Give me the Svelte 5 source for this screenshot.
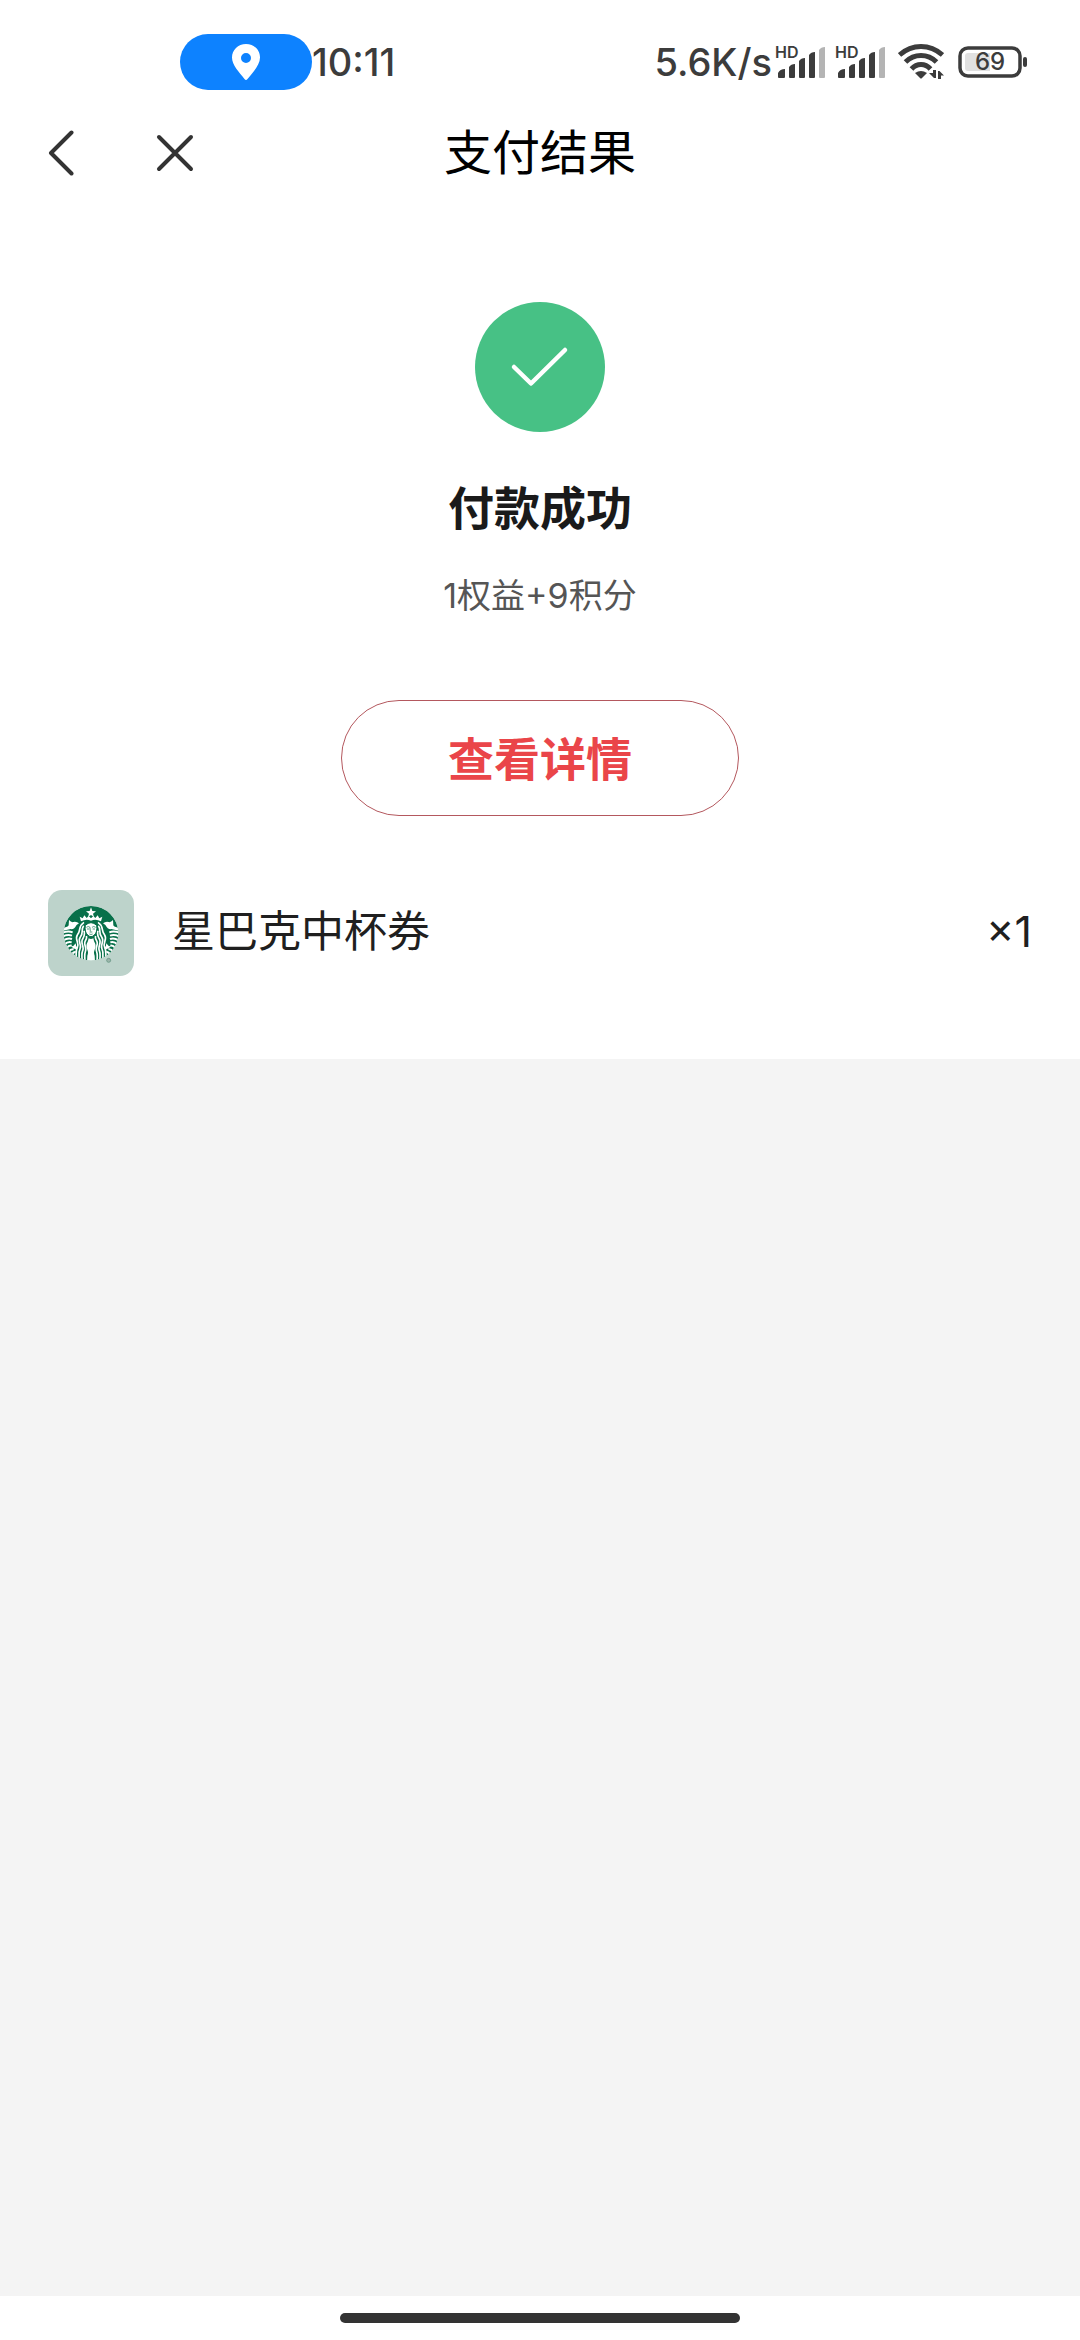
<script>
  const signals = ['SIM 1', 'SIM 2'];
  const items = [{ name: '星巴克中杯券', count: 1 }];
</script>

{#snippet sirenHalf()}
  <path class="white" d="M90 120 Q97 128 103 126 Q113 124 120 130 Q111 135 109 141 Q105 149 95 147 L72 152 L74 143 Q86 142 89 136 Z" />
  <g class="stripe">
    <path d="M70 158 Q88 152 101 157" />
    <path d="M70 170 Q86 162 99 167" />
    <path d="M72 182 Q86 172 99 177" />
    <path d="M76 194 Q87 183 98 187" />
    <path d="M82 205 Q90 195 98 197" />
    <path d="M89 216 Q96 206 104 208" />
    <path d="M98 226 Q102 215 110 216" />
  </g>
  <path class="white" d="M96 199 Q104 200 110 190 Q110 200 116 205 Q108 212 96 199 Z" />
  <g class="hair">
    <path d="M135 127 C116 139 127 151 115 165 C106 178 122 188 115 202 C108 215 114 225 110 237" />
    <path d="M134 137 C125 148 135 158 124 171 C114 184 130 193 123 207 C117 219 123 230 119 242" />
    <path d="M135 152 C139 164 136 168 131 177 C123 189 137 199 131 212 C126 224 131 233 128 246" />
    <path d="M142 168 C145 174 140 180 138 185 C134 196 144 201 139 215 C135 226 139 236 137 246" />
  </g>
  <path class="white" d="M122 110 L131 115 L136 106 L143 114 L149 108 L156 115 L156 122 Q141 116 126 124 Z" />
{/snippet}

<div class="page">
  <header class="status">
    <div class="left">
      <span class="pill">
        <svg width="28" height="38" viewBox="0 0 28 38" aria-hidden="true">
          <path fill="#fff" fill-rule="evenodd" d="M14 1 C6 1 0 7 0 14.500 C0 22 7 29 12.500 36 Q14 38 15.500 36 C21 29 28 22 28 14.500 C28 7 22 1 14 1 Z M14 10 a5 5 0 1 1 0 10 a5 5 0 1 1 0 -10 Z" />
        </svg>
      </span>
      <time>10:11</time>
    </div>
    <div class="right">
      <span class="speed">5.6K/s</span>
      {#each signals as signal}
        <span class="signal" aria-label={signal}>
          <small>HD</small>
          <svg width="48" height="32" viewBox="0 0 48 32" aria-hidden="true">
            <path fill="#3c3c3c" d="M0 31 V27 Q2 23 7 23 V31 Q7 32 6 32 H1 Q0 32 0 31 Z M11 31 V21 Q13 18 17 18 V31 Q17 32 16 32 H12 Q11 32 11 31 Z M21 31 V15 Q23 12 27 12 V31 Q27 32 26 32 H22 Q21 32 21 31 Z M31 31 V9 Q33 6 37 6 V31 Q37 32 36 32 H32 Q31 32 31 31 Z" />
            <path fill="#b4b4b4" d="M41 31 V4 Q43 1 47 1 V31 Q47 32 46 32 H42 Q41 32 41 31 Z" />
          </svg>
        </span>
      {/each}
      <svg class="wifi" width="46" height="36" viewBox="0 0 46 36" aria-hidden="true">
        <g fill="none" stroke="#3c3c3c" stroke-width="5">
          <path d="M1.500 11 Q11 2.500 23 2.500 Q35 2.500 44.500 11" />
          <path d="M7.500 18 Q14 11.500 23 11.500 Q32 11.500 38.500 18" />
          <path d="M13.500 25 Q17.500 20.500 23 20.500 Q28.500 20.500 32.500 25" />
        </g>
        <path fill="#3c3c3c" d="M17 29 Q23 25 29 29 L24 34 Q23 35 22 34 Z" />
        <path fill="#3c3c3c" d="M35 26 H38 V34 H36 L31 29 H35 Z M40 35 V27 H41.500 L46 31.500 H43 V35 Z" />
      </svg>
      <span class="battery">
        <svg width="70" height="32" viewBox="0 0 70 32" aria-hidden="true">
          <rect x="2" y="2" width="60" height="28" rx="8" fill="#fff" stroke="#3c3c3c" stroke-width="3.500" />
          <path d="M10 7 H32 V25 H10 Q7 25 7 22 V10 Q7 7 10 7 Z" fill="#e1e1e1" />
          <rect x="65" y="11" width="4" height="10" rx="2" fill="#3c3c3c" />
        </svg>
        <b>69</b>
      </span>
    </div>
  </header>

  <nav class="bar">
    <div class="actions">
      <button aria-label="返回">
        <svg width="26" height="46" viewBox="0 0 26 46" aria-hidden="true">
          <path d="M23.500 2.500 L3 23 L23.500 43.500" />
        </svg>
      </button>
      <button aria-label="关闭">
        <svg width="38" height="38" viewBox="0 0 38 38" aria-hidden="true">
          <path d="M3 3 L35 35 M35 3 L3 35" />
        </svg>
      </button>
    </div>
    <h1>支付结果</h1>
  </nav>

  <main>
    <section class="result">
      <svg class="tick" width="130" height="130" viewBox="0 0 130 130" aria-hidden="true">
        <circle cx="65" cy="65" r="65" fill="#47c185" />
        <path fill="none" stroke="#fff" stroke-width="4.500" stroke-linecap="round" stroke-linejoin="round" d="M39 65 L56 81.500 L90 48" />
      </svg>
      <h2>付款成功</h2>
      <p>1权益+9积分</p>
      <button class="detail">查看详情</button>
    </section>
    <ul>
      {#each items as item}
        <li>
          <svg class="thumb" width="86" height="86" viewBox="27 30 258 258" aria-hidden="true">
            <defs>
              <clipPath id="disc"><circle cx="156" cy="160" r="82" /></clipPath>
            </defs>
            <rect x="27" y="30" width="258" height="258" fill="#bdd3cb" />
            <g clip-path="url(#disc)">
              <circle cx="156" cy="160" r="82" fill="#08704a" />
              {@render sirenHalf()}
              <g transform="translate(312 0) scale(-1 1)">{@render sirenHalf()}</g>
              <path class="white" d="M149 175 Q156 179 163 175 Q164 182 168 190 Q172 199 167 209 Q163 217 167 227 L168 246 H144 L145 227 Q149 217 145 209 Q140 199 144 190 Q148 182 149 175 Z" />
              <path class="head" d="M139 136 Q156 120 173 136 Q176 156 166 165 Q156 175 146 165 Q136 156 139 136 Z" />
              <path class="face" d="M142 142 Q148 137 153 142 L154 154 M159 142 Q164 137 170 142 M144 147 H151 M161 147 H168 M152 156 H160 M151 162 Q156 165 161 162" />
              <path class="white" d="M156 82 L160 93 L171 94 L162 101 L165 111 L156 105 L147 111 L150 101 L141 94 L152 93 Z" />
            </g>
            <circle cx="209" cy="241" r="6" fill="#9cb5ab" stroke="#5c8f7b" stroke-width="2" />
          </svg>
          <span class="name">{item.name}</span>
          <span class="count">×{item.count}</span>
        </li>
      {/each}
    </ul>
  </main>

  <footer><span></span></footer>
</div>

<style>
  :global(body) {
    margin: 0;
    background: #fff;
  }
  .page {
    min-height: 100vh;
    display: flex;
    flex-direction: column;
    background: #f4f4f4;
    color: #1f1f1f;
    font-family: Inter, 'Noto Sans CJK SC', sans-serif;
  }
  button {
    border: 0;
    padding: 0;
    background: none;
    font-family: inherit;
    cursor: pointer;
  }
  svg {
    display: block;
    flex: none;
  }
  h1, h2, p, ul {
    margin: 0;
    padding: 0;
  }
  .status {
    display: flex;
    justify-content: space-between;
    padding: 34px 52px 0 180px;
    height: 56px;
    background: #fff;
    color: #3c3c3c;
    font-size: 38px;
    font-weight: 500;
    line-height: 56px;
  }
  .left, .right {
    display: flex;
    align-items: center;
  }
  .pill {
    display: flex;
    align-items: center;
    justify-content: center;
    width: 132px;
    height: 56px;
    border-radius: 28px;
    background: #0d82ff;
  }
  .signal {
    position: relative;
    margin: 0 6px;
  }
  .signal small {
    position: absolute;
    left: -3px;
    top: -2px;
    font-size: 16px;
    font-weight: 600;
    line-height: 16px;
  }
  .wifi {
    margin: 0 14px 0 6px;
  }
  .battery {
    position: relative;
  }
  .battery b {
    position: absolute;
    left: 0;
    top: 0;
    width: 64px;
    text-align: center;
    font-size: 24px;
    font-weight: 500;
    line-height: 32px;
  }
  .bar {
    display: grid;
    grid-template-columns: 1fr auto 1fr;
    align-items: center;
    height: 126px;
    padding: 0 48px;
    background: #fff;
  }
  .actions {
    display: flex;
    align-items: center;
    gap: 82px;
  }
  .actions path {
    fill: none;
    stroke: #333;
    stroke-width: 4;
    stroke-linecap: round;
    stroke-linejoin: round;
  }
  h1 {
    color: #000;
    font-size: 48px;
    font-weight: 400;
    line-height: 64px;
  }
  main {
    background: #fff;
  }
  .result {
    display: flex;
    flex-direction: column;
    align-items: center;
    padding-top: 86px;
  }
  h2 {
    margin-top: 44px;
    font-size: 46px;
    font-weight: 700;
    line-height: 64px;
    color: #1a1a1a;
  }
  p {
    margin-top: 32px;
    font-size: 34px;
    line-height: 48px;
    color: #555;
  }
  .detail {
    box-sizing: border-box;
    width: 398px;
    height: 116px;
    margin-top: 80px;
    padding-bottom: 4px;
    border: 1px solid #b4585e;
    border-radius: 58px;
    color: #ea4549;
    font-size: 46px;
    font-weight: 700;
  }
  ul {
    list-style: none;
    padding: 74px 48px 83px;
  }
  li {
    display: flex;
    align-items: center;
    font-size: 43px;
    line-height: 64px;
  }
  .thumb {
    border-radius: 14px;
  }
  .name {
    flex: 1;
    padding-left: 38px;
  }
  .name, .count {
    padding-bottom: 4px;
  }
  .white {
    fill: #fff;
  }
  .stripe {
    fill: none;
    stroke: #fff;
    stroke-width: 6;
  }
  .hair {
    fill: none;
    stroke: #fff;
    stroke-width: 5;
  }
  .head {
    fill: #fff;
    stroke: #08704a;
    stroke-width: 3;
  }
  .face {
    fill: none;
    stroke: #08704a;
    stroke-width: 2;
  }
  footer {
    display: flex;
    justify-content: center;
    margin-top: auto;
    padding: 17px 0;
    background: #fff;
  }
  footer span {
    width: 37%;
    height: 10px;
    border-radius: 5px;
    background: #333;
  }
</style>
